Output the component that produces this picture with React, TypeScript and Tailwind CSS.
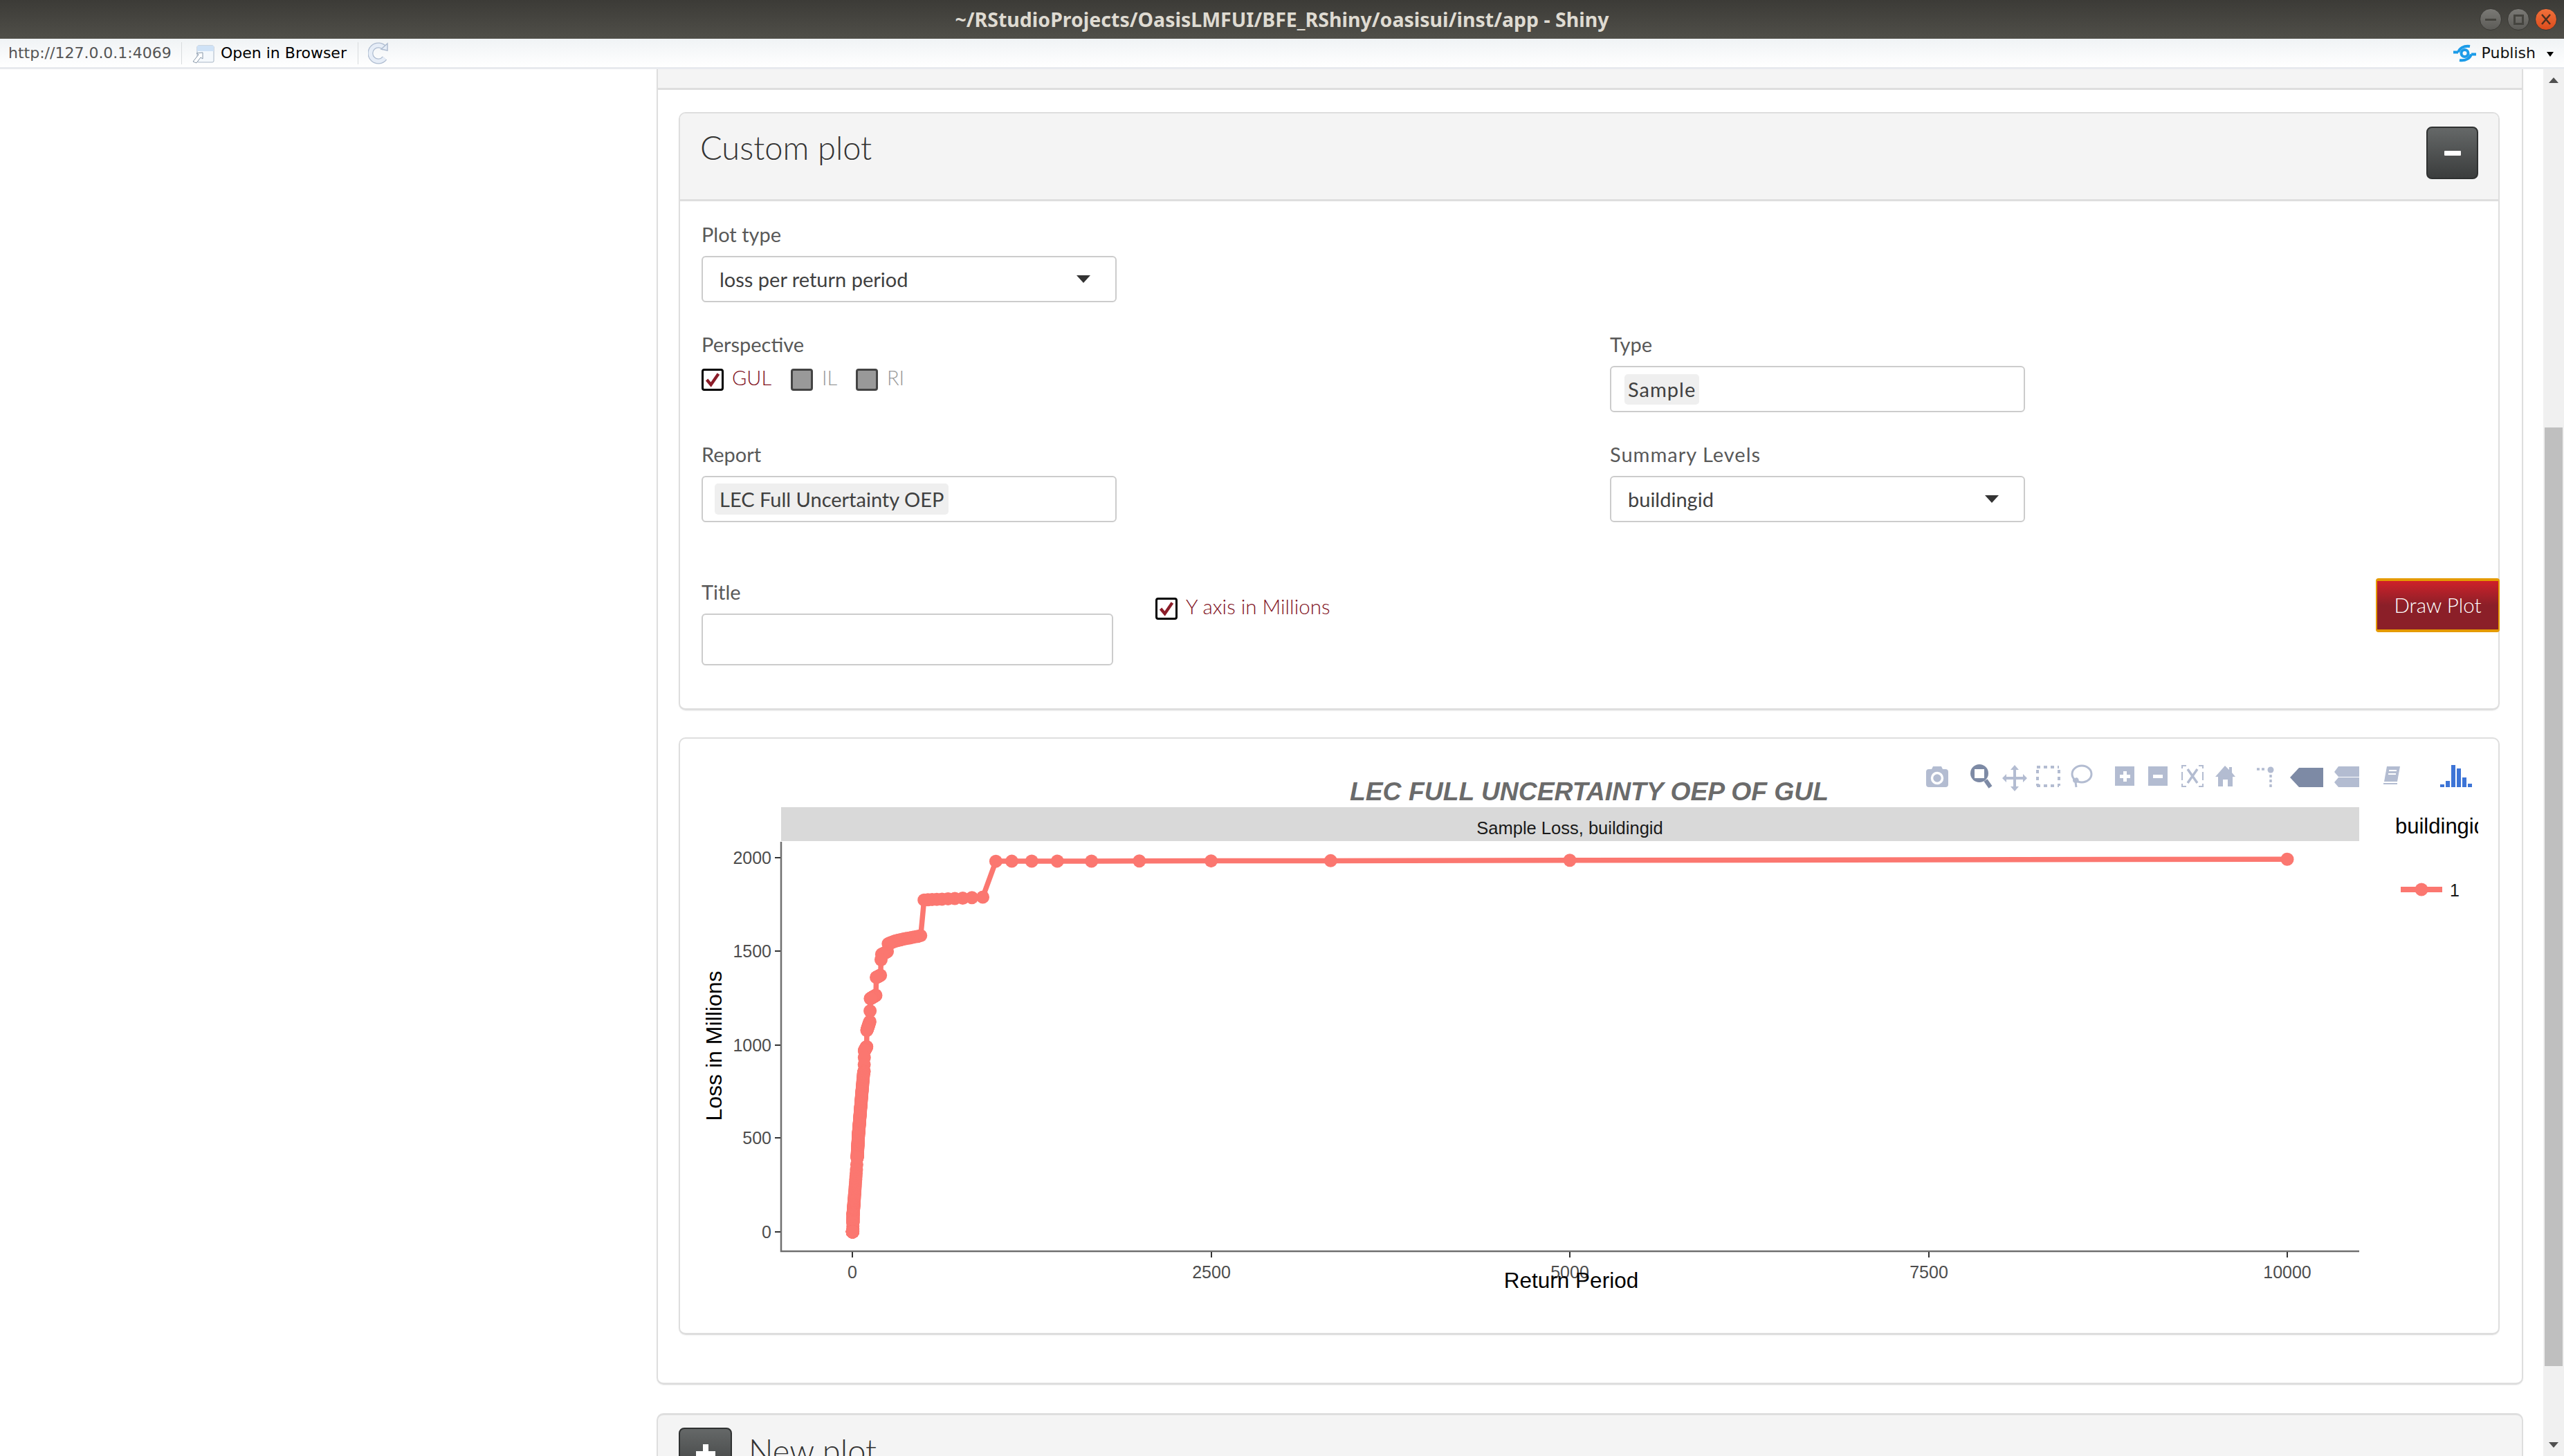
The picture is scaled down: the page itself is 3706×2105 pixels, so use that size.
import React from "react";

const anchors: [number, number][] = [
  [1, 0], [3, 2], [5, 92], [29, 336], [43, 524], [63, 713], [78, 846], [82, 860], [84, 968], [100, 990], [101, 1077],
  [123, 1127], [124, 1246], [165, 1265], [166, 1360], [197, 1372], [201, 1482], [244, 1498], [250, 1540],
  [300, 1555], [367, 1567], [476, 1582], [500, 1774], [909, 1789], [1000, 1981], [10000, 1992],
];
const val = (rp: number) => {
  for (let i = 1; i < anchors.length; i++) {
    if (rp <= anchors[i][0]) {
      const [a, b] = anchors[i - 1];
      const [c, d] = anchors[i];
      return b + ((d - b) * (rp - a)) / (c - a);
    }
  }
  return 1992;
};
const px = (rp: number) => 1232 + rp * 0.2074;
const py = (v: number) => 1781 - v * 0.2705;
const pts: [number, number][] = [];
for (let k = 1; k <= 10000; k += k < 300 ? 1 : k < 2500 ? 25 : 250) {
  const rp = 10000 / k;
  pts.push([px(rp), py(val(rp))]);
}
const linePoints = pts.map((p) => `${p[0].toFixed(1)},${p[1].toFixed(1)}`).join(" ");

const tick = "#4d4d4d";
const off = "#b3bcd1";
const on = "#7d8aa5";

function Modebar() {
  return (
    <g>
      <path fill={off} d="M2784 1116q0-4 4-4h4l2-4h12l2 4h4q4 0 4 4v18q0 4-4 4h-24q-4 0-4-4z" />
      <circle cx="2800" cy="1125" r="7.5" fill="none" stroke="#fff" strokeWidth="3.5" />
      <ellipse cx="2861" cy="1118" rx="13" ry="13" fill={on} />
      <rect x="2854" y="1112" width="14" height="13" fill="#fff" />
      <path stroke={on} strokeWidth="6" d="M2870 1128l7 10" />
      <path fill={off} d="M2912 1106l6 7h-4v10h10v-4l6 6-6 6v-4h-10v10h4l-6 7-6-7h4v-10h-10v4l-6-6 6-6v4h10v-10h-4z" />
      <path fill="none" stroke={off} strokeWidth="4" strokeDasharray="5 5" d="M2944 1109h32M2976 1113v23M2944 1136h32M2945 1113v23" />
      <ellipse cx="3009" cy="1119" rx="14" ry="12" fill="none" stroke={off} strokeWidth="3" />
      <path fill="none" stroke={off} strokeWidth="3" d="M2998 1126c-3 6 7 6 5 1c-2-3-5 0-3 4l1 7" />
      <path fill={off} fillRule="evenodd" d="M3057 1108h28v28h-28zM3069 1115v5h-5v5h5v5h5v-5h5v-5h-5v-5z" />
      <path fill={off} fillRule="evenodd" d="M3105 1108h28v28h-28zM3112 1120v5h14v-5z" />
      <path fill="none" stroke={off} strokeWidth="2" d="M3160 1107h-6v4M3178 1107h6v4M3160 1137h-6v-4M3178 1137h6v-4M3154 1116v12M3184 1116v12" />
      <path fill="none" stroke={off} strokeWidth="3.5" d="M3162 1112l14 20M3176 1112l-14 20" />
      <path fill={off} d="M3216 1107l6 6v-4h4v8l5 6h-4v14h-7v-10h-7v10h-7v-14h-4z" />
      <path fill="none" stroke={off} strokeWidth="3.5" strokeDasharray="4 3" d="M3262 1112h12M3282 1120v19" />
      <circle cx="3282" cy="1113" r="4.5" fill={off} />
      <path fill={on} d="M3310 1124l13-14h35v28h-35z" />
      <path fill={off} d="M3374 1116l6-8h30v15h-30zM3374 1131l6-7h30v14h-30z" />
      <path fill={off} d="M3450 1108h19l-4 22h-19z" />
      <path fill="#fff" d="M3453 1113h11v2h-11zM3452 1118h11v2h-11z" />
      <path fill="none" stroke={off} strokeWidth="2" d="M3445 1133h20" />
      <g fill="#3d74d6">
        <rect x="3527" y="1134" width="6" height="4" />
        <rect x="3535" y="1129" width="6" height="9" />
        <rect x="3543" y="1106" width="6" height="32" />
        <rect x="3551" y="1111" width="6" height="27" />
        <rect x="3559" y="1124" width="6" height="14" />
        <rect x="3567" y="1133" width="6" height="5" />
      </g>
    </g>
  );
}

function Chart() {
  const yt = [[2000, 1240], [1500, 1375], [1000, 1511], [500, 1645], [0, 1781]];
  const xt = [[0, 1232], [2500, 1751], [5000, 2269], [7500, 2788], [10000, 3306]];
  return (
    <svg viewBox="983 1068 2628 858" width={2628} height={858} className="block" fontFamily="'Liberation Sans', sans-serif">
      <Modebar />
      <text x="2297" y="1157" textAnchor="middle" fontSize="37.3" fontWeight="700" fontStyle="italic" fill="#6b6b6b">LEC FULL UNCERTAINTY OEP OF GUL</text>
      <rect x="1129" y="1167" width="2281" height="49" fill="#d9d9d9" />
      <text x="2269" y="1206" textAnchor="middle" fontSize="25.5" fill="#1a1a1a">Sample Loss, buildingid</text>
      <path d="M1129 1217v592h2281" fill="none" stroke="#6f6f6f" strokeWidth="2.5" />
      {yt.map(([v, y]) => (
        <g key={v}>
          <path d={`M1120 ${y}h8`} stroke="#333" strokeWidth="2" />
          <text x="1115" y={y + 9} textAnchor="end" fontSize="25" fill={tick}>{v}</text>
        </g>
      ))}
      {xt.map(([v, x]) => (
        <g key={v}>
          <path d={`M${x} 1810v8`} stroke="#333" strokeWidth="2" />
          <text x={x} y="1848" textAnchor="middle" fontSize="25" fill={tick}>{v}</text>
        </g>
      ))}
      <text transform="translate(1043 1512) rotate(-90)" textAnchor="middle" fontSize="32" fill="#000">Loss in Millions</text>
      <text x="2271" y="1862" textAnchor="middle" fontSize="31.5" fill="#000">Return Period</text>
      <polyline points={linePoints} fill="none" stroke="#fb7770" strokeWidth="7.5" strokeLinejoin="round" />
      {pts.map((p, i) => (
        <circle key={i} cx={p[0]} cy={p[1]} r="9.5" fill="#fb7770" />
      ))}
      <svg x="3440" y="1160" width="142" height="60" viewBox="3440 1160 142 60">
        <text x="3462" y="1205" fontSize="31" fill="#000">buildingid</text>
      </svg>
      <path d="M3470 1286h60" stroke="#fb7770" strokeWidth="8" />
      <circle cx="3500" cy="1286" r="9.5" fill="#fb7770" />
      <text x="3541" y="1296" fontSize="25" fill="#1a1a1a">1</text>
    </svg>
  );
}

function Label({ children, wide }: { children: React.ReactNode; wide?: boolean }) {
  return <div className={`h-[40px] leading-[40px] text-[29px] text-[#595959] ${wide ? "tracking-[1px]" : ""}`}>{children}</div>;
}

function Field({ label, wide, h = "h-[67px]", w = "w-[600px]", children }: { label: string; wide?: boolean; h?: string; w?: string; children?: React.ReactNode }) {
  return (
    <div>
      <Label wide={wide}>{label}</Label>
      <div className={`mt-[11px] ${h} ${w} relative flex items-center rounded-[6px] border-2 border-[#cccccc] bg-white text-[29px] text-[#404040]`}>{children}</div>
    </div>
  );
}

function Arrow() {
  return <div className="absolute right-[36px] top-[26px] w-0 h-0 border-x-[10px] border-x-transparent border-t-[11px] border-t-[#333333]" />;
}

function Check({ on, disabled }: { on?: boolean; disabled?: boolean }) {
  return (
    <span className={`w-[32px] h-[32px] shrink-0 rounded-[4px] border-[3px] flex items-center justify-center ${disabled ? "bg-[#999999] border-[#444444]" : "bg-white border-black"}`}>
      {on && (
        <svg viewBox="0 0 20 20" width="24" height="24">
          <path d="M3 10l5 6 9-13" fill="none" stroke="#8b1c28" strokeWidth="3.6" />
        </svg>
      )}
    </span>
  );
}

function DarkBtn({ className, children }: { className: string; children: React.ReactNode }) {
  return (
    <div className={`${className} h-[76px] rounded-[8px] border-2 border-[#2f3131] bg-gradient-to-b from-[#656868] to-[#3b3d3d] flex items-center justify-center shrink-0`}>{children}</div>
  );
}

export default function App() {
  return (
    <div className="w-[3706px] h-[2105px] overflow-hidden bg-white flex flex-col font-['Lato',sans-serif]">
      <div className="h-[56px] shrink-0 relative bg-gradient-to-b from-[#3c3b37] to-[#504f49] flex items-center justify-center">
        <span className="text-[28.5px] font-bold text-[#dfdbd2] font-['Noto_Sans',sans-serif]">~/RStudioProjects/OasisLMFUI/BFE_RShiny/oasisui/inst/app - Shiny</span>
        <div className="absolute right-[10px] top-[12px] flex gap-[8px]">
          <div className="w-[32px] h-[32px] rounded-full bg-gradient-to-b from-[#7b7a76] to-[#5c5b57] border border-[#3a3935] flex items-center justify-center">
            <div className="w-[16px] h-[3px] bg-[#45443f]" />
          </div>
          <div className="w-[32px] h-[32px] rounded-full bg-gradient-to-b from-[#7b7a76] to-[#5c5b57] border border-[#3a3935] flex items-center justify-center">
            <div className="w-[15px] h-[15px] border-[3px] border-[#45443f]" />
          </div>
          <div className="w-[32px] h-[32px] rounded-full bg-gradient-to-b from-[#f0703a] to-[#dc4c1c] border border-[#3a3935] flex items-center justify-center">
            <svg width="16" height="18" viewBox="0 0 16 18"><path d="M2 2l12 14M14 2L2 16" stroke="#4a3020" strokeWidth="2.5" /></svg>
          </div>
        </div>
      </div>
      <div className="h-[44px] shrink-0 bg-gradient-to-b from-[#f0f3f5] to-[#ffffff] border-b-[3px] border-[#e8eaee] flex items-center font-['DejaVu_Sans',sans-serif] text-[22px] pl-[12px]">
        <span className="w-[250px] text-[#555555] whitespace-nowrap">http://127.0.0.1:4069</span>
        <div className="w-px h-[32px] bg-[#d9dcde]" />
        <svg className="ml-[14px]" width="34" height="30" viewBox="0 0 34 30">
          <rect x="8" y="4" width="24" height="24" rx="2" fill="#f4f8fc" stroke="#a9b6c6" />
          <rect x="8" y="4" width="24" height="8" fill="#cfe2f6" />
          <path d="M2 27l8-10-3-2 9-1v9l-3-2-6 8z" fill="#fff" stroke="#8696a8" />
        </svg>
        <span className="ml-[8px] w-[198px] text-black whitespace-nowrap">Open in Browser</span>
        <div className="w-px h-[32px] bg-[#d9dcde]" />
        <svg className="ml-[14px]" width="30" height="32" viewBox="0 0 30 32">
          <path d="M24 9A11.5 11.5 0 1 0 24 23" fill="none" stroke="#aebcd0" strokeWidth="8" />
          <path d="M24 9A11.5 11.5 0 1 0 24 23" fill="none" stroke="#e6edf7" strokeWidth="5.5" />
          <path d="M19 10l9 2V2z" fill="#e6edf7" stroke="#aebcd0" strokeWidth="1.5" />
        </svg>
        <div className="ml-auto flex items-center">
          <svg width="33" height="26" viewBox="0 0 33 26">
            <circle cx="16.5" cy="13" r="5" fill="none" stroke="#1b9be8" strokeWidth="4" />
            <path d="M0 11.5h7M26 14.5h7M7 11.5C9 6 15 1.5 24 3M26 14.5C24 20 18 24.500 9 23" fill="none" stroke="#1b9be8" strokeWidth="4" />
          </svg>
          <span className="ml-[8px] text-[#111111]">Publish</span>
          <div className="ml-[16px] mr-[15px] mt-[4px] w-0 h-0 border-x-[5px] border-x-transparent border-t-[7px] border-t-black" />
        </div>
      </div>
      <div className="flex-1 flex min-h-0">
        <div className="w-[949px] shrink-0" />
        <div className="w-[2698px] shrink-0 relative">
          <div className="h-[1902px] rounded-b-[10px] border-x-2 border-b-[3px] border-[#dedede] shadow-[0_1px_2px_rgba(0,0,0,0.05)]">
            <div className="h-[30px] bg-[#f4f4f4] border-b-[3px] border-[#dedede]" />
            <div className="pl-[30px] pr-[32px] pt-[32px]">
              <div className="h-[865px] rounded-[10px] border-2 border-b-[3px] border-[#dedede] shadow-[0_1px_2px_rgba(0,0,0,0.05)] flex flex-col">
                <div className="h-[127px] shrink-0 bg-[#f4f4f4] rounded-t-[8px] border-b-[3px] border-[#dedede] flex items-start justify-between pl-[29px] pr-[29px]">
                  <div className="text-[47px] leading-[56px] mt-[21px] text-[#333333] font-light">Custom plot</div>
                  <DarkBtn className="w-[75px] mt-[19px]">
                    <div className="w-[24px] h-[7px] bg-white rounded-[1px]" />
                  </DarkBtn>
                </div>
                <div className="flex-1 pl-[31px] pt-[28px] flex flex-col">
                  <Field label="Plot type">
                    <span className="pl-[24px]">loss per return period</span>
                    <Arrow />
                  </Field>
                  <div className="flex mt-[41px] h-[159px]">
                    <div className="w-[1313px] shrink-0">
                      <Label>Perspective</Label>
                      <div className="flex items-center mt-[15px] text-[29px] h-[32px]">
                        <Check on />
                        <span className="ml-[12px] w-[85px] text-[#80101c] -mt-[6px] font-light">GUL</span>
                        <Check disabled />
                        <span className="ml-[13px] w-[49px] text-[#9a9a9a] -mt-[6px] font-light">IL</span>
                        <Check disabled />
                        <span className="ml-[13px] text-[#9a9a9a] -mt-[6px] font-light">RI</span>
                      </div>
                    </div>
                    <Field label="Type">
                      <span className="ml-[19px] h-[44px] px-[5px] rounded-[5px] bg-[#efefef] flex items-center tracking-[1px]">Sample</span>
                    </Field>
                  </div>
                  <div className="flex h-[199px]">
                    <div className="w-[1313px] shrink-0">
                      <Field label="Report">
                        <span className="ml-[17px] h-[45px] px-[7px] rounded-[5px] bg-[#efefef] flex items-center">LEC Full Uncertainty OEP</span>
                      </Field>
                    </div>
                    <Field label="Summary Levels" wide>
                      <span className="pl-[24px]">buildingid</span>
                      <Arrow />
                    </Field>
                  </div>
                  <div className="flex items-start">
                    <div className="w-[656px] shrink-0">
                      <Field label="Title" h="h-[75px]" w="w-[595px]" />
                    </div>
                    <div className="flex items-center mt-[28px] h-[32px] text-[29.5px] text-[#80101c] font-light">
                      <Check on />
                      <span className="ml-[12px] -mt-[6px]">Y axis in Millions</span>
                    </div>
                    <div className="ml-auto -mr-[2px] w-[179px] h-[78px] rounded-[4px] border-y-[4px] border-x-2 border-[#e59a00] bg-gradient-to-b from-[#cf2029] via-[#8b1f28] to-[#8b1f28] text-white text-[29.5px] font-light flex items-center justify-center">Draw Plot</div>
                  </div>
                </div>
              </div>
              <div className="mt-[39px] h-[864px] rounded-[10px] border-2 border-b-[3px] border-[#dedede] shadow-[0_1px_2px_rgba(0,0,0,0.05)] overflow-hidden">
                <Chart />
              </div>
            </div>
          </div>
          <div className="mt-[41px] h-[100px] rounded-t-[10px] border-x-2 border-t-[3px] border-[#dedede] bg-[#f4f4f4] flex items-start pl-[30px] pt-[18px]">
            <DarkBtn className="w-[77px]">
              <div className="relative w-[28px] h-[28px]">
                <div className="absolute left-[10px] top-0 w-[8px] h-[28px] bg-white" />
                <div className="absolute left-0 top-[10px] w-[28px] h-[8px] bg-white" />
              </div>
            </DarkBtn>
            <div className="ml-[24px] mt-[5px] text-[47px] leading-[56px] text-[#333333] font-light">New plot</div>
          </div>
        </div>
        <div className="w-[29px] shrink-0" />
        <div className="w-[30px] shrink-0 bg-[#f0f0f0] flex flex-col items-center relative">
          <div className="absolute top-[12px] left-[8px] w-0 h-0 border-x-[7px] border-x-transparent border-b-[8px] border-b-[#505050]" />
          <div className="absolute top-[518px] left-[2px] w-[26px] h-[1357px] bg-[#bfbfbf]" />
          <div className="absolute bottom-[12px] left-[8px] w-0 h-0 border-x-[7px] border-x-transparent border-t-[8px] border-t-[#505050]" />
        </div>
      </div>
    </div>
  );
}
